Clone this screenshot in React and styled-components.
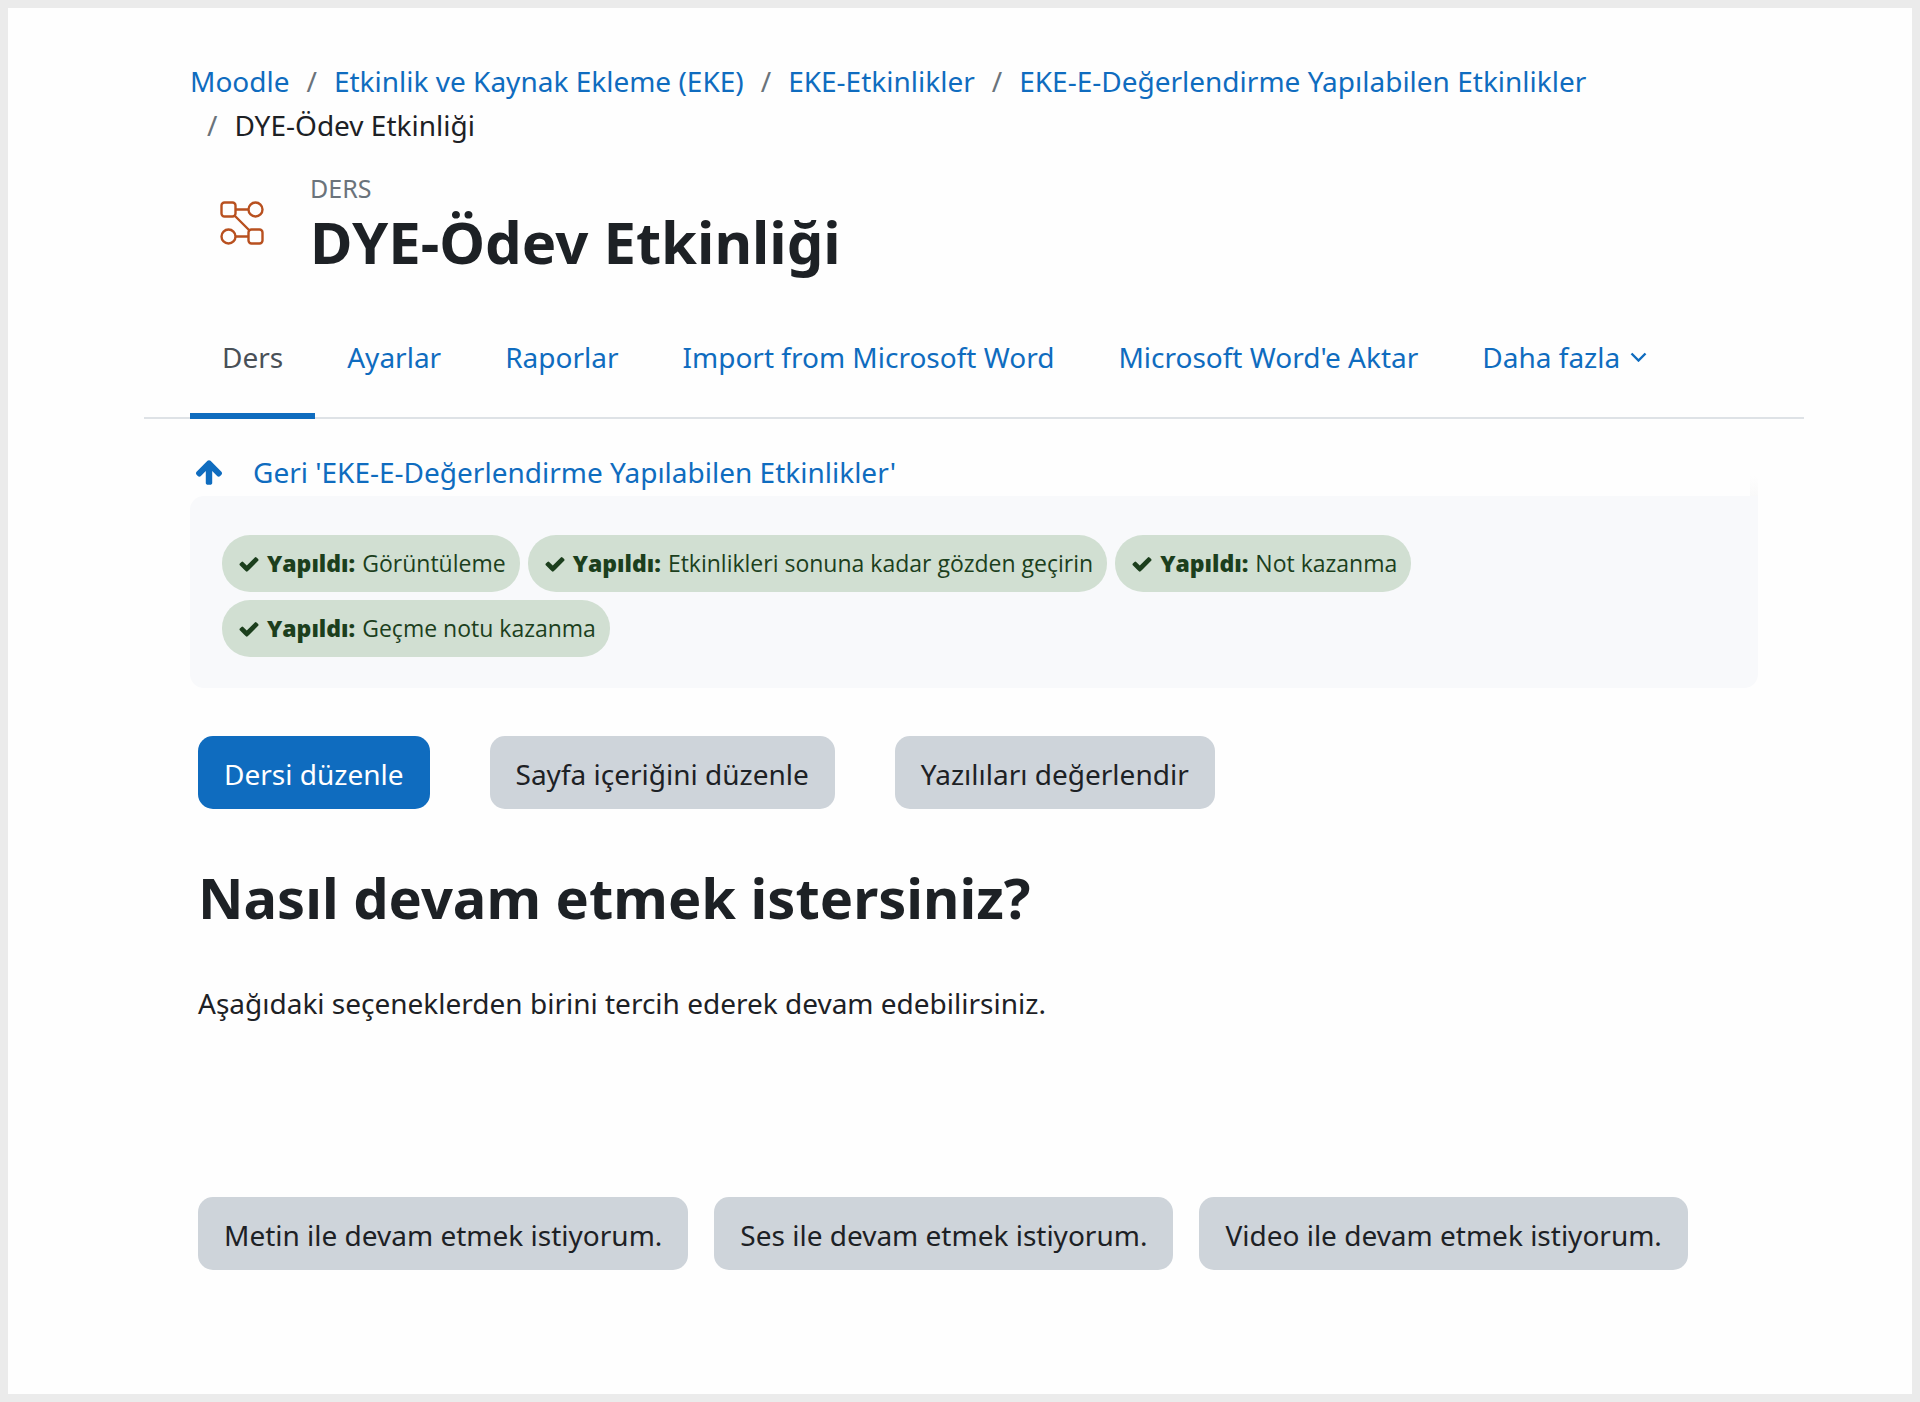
import React from "react";
import styled, { createGlobalStyle, css } from "styled-components";

const color = {
  link: "#0f6cbf",
  text: "#1d2125",
  muted: "#6a737b",
  frame: "#ebebeb",
  page: "#fefefe",
  rule: "#dee2e6",
  panel: "#f8f9fb",
  secondary: "#ced4da",
  badge: "#d1dfd2",
  badgeText: "#1c3f1d",
  activity: "#b8501f",
};

const GlobalStyle = createGlobalStyle`
  *, *::before, *::after { box-sizing: border-box; }
  body {
    margin: 0;
    background: ${color.page};
    color: ${color.text};
    font-family: "Noto Sans", "Open Sans", sans-serif;
    font-size: 28px;
    line-height: 44px;
  }
`;

const Frame = styled.div`
  min-height: 100vh;
  padding: 51px 108px 72px 136px;
  border: 8px solid ${color.frame};
  background: ${color.page};
`;

const Section = styled.div`
  padding: 0 46px;
`;

const Link = styled.a`
  color: ${color.link};
  text-decoration: none;
  &:hover { text-decoration: underline; }
`;

const Crumbs = styled.ol`
  display: flex;
  flex-wrap: wrap;
  margin: 0;
  padding: 0;
  list-style: none;
`;

const Slash = styled.span`
  padding: 0 17px;
  color: ${color.muted};
`;

const PageHeader = styled.header`
  display: flex;
  align-items: flex-start;
  gap: 16px;
  margin-top: 26px;
`;

const ActivityIcon = styled.div`
  display: flex;
  padding: 28px 30px 0;
  color: ${color.activity};
`;

const ActivityType = styled.div`
  color: ${color.muted};
  font-size: 25px;
  line-height: 30px;
  text-transform: uppercase;
`;

const Title = styled.h1`
  margin: 0;
  font-size: 58px;
  line-height: 78px;
  font-weight: 700;
`;

const Tabs = styled.nav`
  display: flex;
  margin-top: 26px;
  padding: 0 46px;
  border-bottom: 2px solid ${color.rule};
`;

const Tab = styled.a`
  display: flex;
  align-items: center;
  gap: 10px;
  margin-bottom: -2px;
  padding: 28px 32px 34px;
  border-bottom: 6px solid ${(p) => (p.$active ? color.link : "transparent")};
  color: ${(p) => (p.$active ? "#495057" : color.link)};
  text-decoration: none;
`;

const BackLink = styled(Link)`
  display: flex;
  align-items: center;
  gap: 29px;
  margin-top: 31px;
  padding: 0 4px 2px;
`;

const Completion = styled.section`
  position: relative;
  display: flex;
  flex-wrap: wrap;
  gap: 8px;
  padding: 39px 32px 31px;
  border-radius: 14px 0 14px 14px;
  background: ${color.panel};
  &::before {
    content: "";
    position: absolute;
    right: 0;
    bottom: 100%;
    width: 8px;
    height: 20px;
    background: linear-gradient(to top, #f9f9f9, ${color.page});
  }
`;

const Badge = styled.div`
  display: flex;
  align-items: center;
  gap: 7px;
  padding: 0 14px 0 16px;
  border-radius: 28px;
  background: ${color.badge};
  color: ${color.badgeText};
  font-family: "Open Sans", "Noto Sans", sans-serif;
  font-size: 23px;
  line-height: 57px;
`;

const BadgeStatus = styled.strong`
  font-weight: 800;
`;

const Actions = styled.div`
  display: flex;
  flex-wrap: wrap;
  gap: ${(p) => p.$gap}px;
  margin-top: ${(p) => p.$top}px;
  padding: 0 8px;
`;

const Button = styled.button`
  padding: 16px 26px 13px;
  border: 0;
  border-radius: 15px;
  background: ${color.secondary};
  color: ${color.text};
  font: inherit;
  cursor: pointer;
  ${(p) =>
    p.$primary &&
    css`
      background: ${color.link};
      color: #fff;
    `}
`;

const Question = styled.h2`
  margin: 50px 0 0;
  padding: 0 8px;
  font-size: 56px;
  line-height: 76px;
  font-weight: 700;
`;

const Hint = styled.p`
  margin: 46px 0 0;
  padding: 0 8px;
`;

const LessonIcon = () => (
  <svg width="44" height="44" viewBox="0 0 44 44" fill="none" stroke="currentColor" strokeWidth="2.4" aria-hidden="true">
    <rect x="1.5" y="1.5" width="14" height="14" rx="3" />
    <circle cx="35.5" cy="8.5" r="7" />
    <circle cx="8.5" cy="35.5" r="7" />
    <rect x="28.5" y="28.5" width="14" height="14" rx="3" />
    <path d="M15.5 8.5h13M15.5 35.5h13M15 15l14 14" />
  </svg>
);

const Chevron = () => (
  <svg width="17" height="10" viewBox="0 0 17 10" fill="none" stroke="currentColor" strokeWidth="2.4" aria-hidden="true">
    <path d="M1.5 1.5l7 7 7-7" />
  </svg>
);

const ArrowUp = () => (
  <svg width="30" height="30" viewBox="0 0 1792 1792" fill="currentColor" aria-hidden="true">
    <path d="M1675 971q0 51-37 90l-75 75q-38 38-91 38-54 0-90-38l-294-293v704q0 52-37.5 84.5t-90.5 32.5h-128q-53 0-90.5-32.5t-37.5-84.5v-704l-294 293q-36 38-90 38t-90-38l-75-75q-38-38-38-90 0-53 38-91l651-651q35-37 90-37 54 0 91 37l651 651q37 39 37 91z" />
  </svg>
);

const Check = () => (
  <svg width="22" height="22" viewBox="0 0 1792 1792" fill="currentColor" aria-hidden="true">
    <path d="M1671 566q0 40-28 68l-724 724-136 136q-28 28-68 28t-68-28l-136-136-362-362q-28-28-28-68t28-68l136-136q28-28 68-28t68 28l294 295 656-657q28-28 68-28t68 28l136 136q28 28 28 68z" />
  </svg>
);

const trail = [
  "Moodle",
  "Etkinlik ve Kaynak Ekleme (EKE)",
  "EKE-Etkinlikler",
  "EKE-E-Değerlendirme Yapılabilen Etkinlikler",
];
const tabs = ["Ders", "Ayarlar", "Raporlar", "Import from Microsoft Word", "Microsoft Word'e Aktar"];
const conditions = [
  "Görüntüleme",
  "Etkinlikleri sonuna kadar gözden geçirin",
  "Not kazanma",
  "Geçme notu kazanma",
];

export default function App() {
  return (
    <>
      <GlobalStyle />
      <Frame>
        <Section>
          <nav aria-label="Breadcrumb">
            <Crumbs>
              {trail.map((name, i) => (
                <li key={name}>
                  {i > 0 && <Slash>/</Slash>}
                  <Link href="#">{name}</Link>
                </li>
              ))}
              <li>
                <Slash>/</Slash>
                DYE-Ödev Etkinliği
              </li>
            </Crumbs>
          </nav>
          <PageHeader>
            <ActivityIcon>
              <LessonIcon />
            </ActivityIcon>
            <div>
              <ActivityType>Ders</ActivityType>
              <Title>DYE-Ödev Etkinliği</Title>
            </div>
          </PageHeader>
        </Section>

        <Tabs>
          {tabs.map((name, i) => (
            <Tab key={name} href="#" $active={i === 0}>
              {name}
            </Tab>
          ))}
          <Tab href="#">
            Daha fazla
            <Chevron />
          </Tab>
        </Tabs>

        <Section as="main">
          <BackLink href="#">
            <ArrowUp />
            Geri 'EKE-E-Değerlendirme Yapılabilen Etkinlikler'
          </BackLink>

          <Completion>
            {conditions.map((name) => (
              <Badge key={name}>
                <Check />
                <BadgeStatus>Yapıldı:</BadgeStatus>
                <span>{name}</span>
              </Badge>
            ))}
          </Completion>

          <Actions $gap={60} $top={48}>
            <Button $primary>Dersi düzenle</Button>
            <Button>Sayfa içeriğini düzenle</Button>
            <Button>Yazılıları değerlendir</Button>
          </Actions>

          <Question>Nasıl devam etmek istersiniz?</Question>
          <Hint>Aşağıdaki seçeneklerden birini tercih ederek devam edebilirsiniz.</Hint>

          <Actions $gap={26} $top={172}>
            <Button>Metin ile devam etmek istiyorum.</Button>
            <Button>Ses ile devam etmek istiyorum.</Button>
            <Button>Video ile devam etmek istiyorum.</Button>
          </Actions>
        </Section>
      </Frame>
    </>
  );
}
